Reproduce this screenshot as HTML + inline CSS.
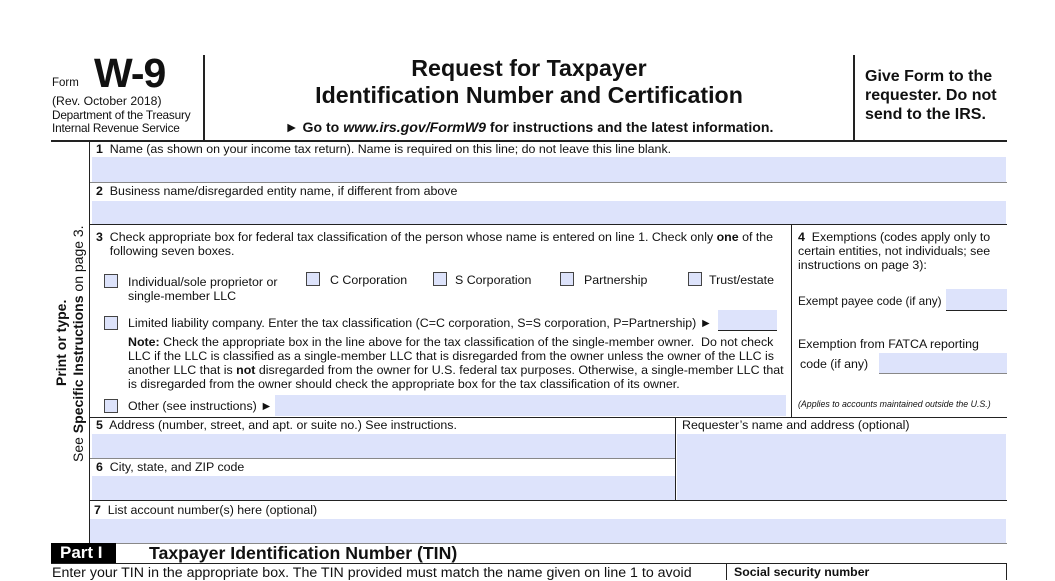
<!DOCTYPE html>
<html><head><meta charset="utf-8"><style>
*{margin:0;padding:0;box-sizing:border-box}
body{width:1055px;height:580px;overflow:hidden;background:#fff;font-family:"Liberation Sans",Arial,sans-serif;color:#111;position:relative}
.a{position:absolute;white-space:nowrap}
.f{position:absolute;background:#dde3fb}
.h{position:absolute;height:1px;background:#222}
.g{position:absolute;height:1px;background:#888}
.v{position:absolute;width:1px;background:#222}
.s{font-size:12.4px}
.cb{position:absolute;width:14px;height:14px;border:1px solid #444;background:#dde3fb}
b{font-weight:bold}
</style></head><body>
<div class="a" style="left:52px;top:77px;font-size:11.5px">Form</div>
<div class="a" style="left:94px;top:50px;font-size:41px;font-weight:bold;letter-spacing:-1px;">W-9</div>
<div class="a" style="left:52px;top:94px;font-size:12.2px">(Rev. October 2018)</div>
<div class="a" style="left:52px;top:109px;font-size:11.8px;line-height:12.5px;letter-spacing:-0.2px">Department of the Treasury<br>Internal Revenue Service</div>
<div class="v" style="left:203px;top:55px;height:86px;width:2px"></div>
<div class="v" style="left:853px;top:55px;height:86px;width:2px"></div>
<div class="a" style="left:204px;width:650px;text-align:center;top:55px;font-size:23.2px;font-weight:bold;line-height:27px">Request for Taxpayer<br>Identification Number and Certification</div>
<div class="a" style="left:204px;width:650px;text-align:center;top:119px;font-size:14.1px;font-weight:bold">► Go to <i>www.irs.gov/FormW9</i> for instructions and the latest information.</div>
<div class="a" style="left:865px;top:67px;font-size:16px;font-weight:bold;line-height:19px">Give Form to the<br>requester. Do not<br>send to the IRS.</div>
<div class="h" style="left:51px;top:140px;width:956px;height:2px"></div>
<div class="v" style="left:89px;top:141px;height:402px"></div>
<div class="a" style="left:53px;top:386px;transform-origin:0 0;transform:rotate(-90deg);font-size:14px;font-weight:bold">Print or type.</div>
<div class="a" style="left:70px;top:462px;transform-origin:0 0;transform:rotate(-90deg);font-size:14px">See <b>Specific Instructions</b> on page 3.</div>
<div class="a s" style="left:96px;top:142px"><b>1</b>&nbsp; Name (as shown on your income tax return). Name is required on this line; do not leave this line blank.</div>
<div class="f" style="left:92px;top:157px;width:914px;height:25px"></div>
<div class="g" style="left:90px;top:182px;width:917px"></div>
<div class="a s" style="left:96px;top:184px"><b>2</b>&nbsp; Business name/disregarded entity name, if different from above</div>
<div class="f" style="left:92px;top:201px;width:914px;height:23px"></div>
<div class="h" style="left:90px;top:224px;width:917px"></div>
<div class="v" style="left:791px;top:224px;height:193px"></div>
<div class="a s" style="left:96px;top:230px;line-height:14px"><b>3</b>&nbsp; Check appropriate box for federal tax classification of the person whose name is entered on line 1. Check only <b>one</b> of the<br>&nbsp;&nbsp;&nbsp;&nbsp;following seven boxes.</div>
<div class="cb" style="left:104px;top:274px"></div>
<div class="a s" style="left:128px;top:275px;line-height:14px">Individual/sole proprietor or<br>single-member LLC</div>
<div class="cb" style="left:306px;top:272px"></div><div class="a s" style="left:330px;top:273px">C Corporation</div>
<div class="cb" style="left:433px;top:272px"></div><div class="a s" style="left:455px;top:273px">S Corporation</div>
<div class="cb" style="left:560px;top:272px"></div><div class="a s" style="left:584px;top:273px">Partnership</div>
<div class="cb" style="left:688px;top:272px"></div><div class="a s" style="left:709px;top:273px">Trust/estate</div>
<div class="cb" style="left:104px;top:316px"></div>
<div class="a s" style="left:128px;top:316px">Limited liability company. Enter the tax classification (C=C corporation, S=S corporation, P=Partnership) ►</div>
<div class="f" style="left:718px;top:310px;width:59px;height:20px"></div><div class="h" style="left:718px;top:330px;width:59px"></div>
<div class="a s" style="left:128px;top:335px;line-height:14px"><b>Note:</b> Check the appropriate box in the line above for the tax classification of the single-member owner.&nbsp; Do not check<br>LLC if the LLC is classified as a single-member LLC that is disregarded from the owner unless the owner of the LLC is<br>another LLC that is <b>not</b> disregarded from the owner for U.S. federal tax purposes. Otherwise, a single-member LLC that<br>is disregarded from the owner should check the appropriate box for the tax classification of its owner.</div>
<div class="cb" style="left:104px;top:399px"></div>
<div class="a s" style="left:128px;top:399px">Other (see instructions) ►</div>
<div class="f" style="left:275px;top:395px;width:511px;height:21px"></div>
<div class="a s" style="left:798px;top:230px;line-height:14px"><b>4</b>&nbsp; Exemptions (codes apply only to<br>certain entities, not individuals; see<br>instructions on page 3):</div>
<div class="a" style="left:798px;top:294px;font-size:11.8px">Exempt payee code (if any)</div>
<div class="f" style="left:946px;top:289px;width:61px;height:21px"></div><div class="h" style="left:946px;top:310px;width:61px"></div>
<div class="a s" style="left:798px;top:337px">Exemption from FATCA reporting</div>
<div class="a s" style="left:800px;top:357px">code (if any)</div>
<div class="f" style="left:879px;top:353px;width:128px;height:20px"></div><div class="g" style="left:879px;top:373px;width:128px"></div>
<div class="a" style="left:798px;top:399px;font-size:8.8px;font-style:italic">(Applies to accounts maintained outside the U.S.)</div>
<div class="h" style="left:90px;top:417px;width:917px"></div>
<div class="v" style="left:675px;top:417px;height:84px"></div>
<div class="a s" style="left:96px;top:418px"><b>5</b>&nbsp; Address (number, street, and apt. or suite no.) See instructions.</div>
<div class="a s" style="left:682px;top:418px">Requester’s name and address (optional)</div>
<div class="f" style="left:92px;top:434px;width:583px;height:24px"></div>
<div class="f" style="left:677px;top:434px;width:329px;height:66px"></div>
<div class="g" style="left:90px;top:458px;width:585px"></div>
<div class="a s" style="left:96px;top:460px"><b>6</b>&nbsp; City, state, and ZIP code</div>
<div class="f" style="left:92px;top:476px;width:583px;height:24px"></div>
<div class="h" style="left:90px;top:500px;width:917px"></div>
<div class="a s" style="left:94px;top:503px"><b>7</b>&nbsp; List account number(s) here (optional)</div>
<div class="f" style="left:90px;top:519px;width:916px;height:24px"></div>
<div class="g" style="left:90px;top:543px;width:917px"></div>
<div class="a" style="left:51px;top:543px;width:65px;height:20px;background:#000;color:#fff;font-weight:bold;font-size:17px;line-height:20px;padding-left:9px">Part I</div>
<div class="a" style="left:149px;top:543px;font-size:17.7px;font-weight:bold">Taxpayer Identification Number (TIN)</div>
<div class="h" style="left:51px;top:563px;width:956px"></div>
<div class="v" style="left:726px;top:563px;height:17px"></div>
<div class="v" style="left:1006px;top:563px;height:17px"></div>
<div class="a" style="left:52px;top:565px;font-size:14.2px">Enter your TIN in the appropriate box. The TIN provided must match the name given on line 1 to avoid</div>
<div class="a" style="left:734px;top:565px;font-size:12.3px;font-weight:bold">Social security number</div>
</body></html>
